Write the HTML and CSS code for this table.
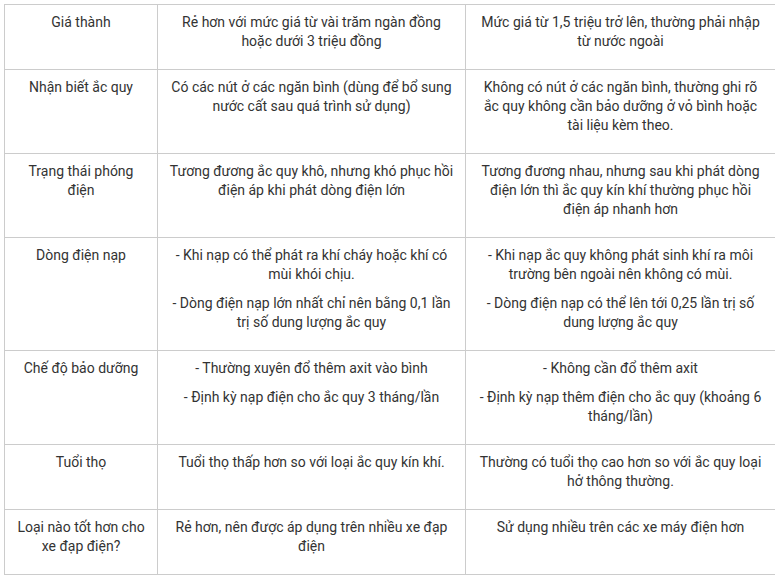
FILE: index.html
```html
<!DOCTYPE html>
<html lang="vi">
<head>
<meta charset="utf-8">
<title>So sánh ắc quy</title>
<link rel="stylesheet" href="styles.css">
</head>
<body>
<table class="cmp">
  <colgroup>
    <col class="c1">
    <col class="c2">
    <col class="c3">
  </colgroup>
  <tbody>
    <tr>
      <td><p>Giá thành</p></td>
      <td><p>Rẻ hơn với mức giá từ vài trăm ngàn đồng hoặc dưới 3 triệu đồng</p></td>
      <td><p>Mức giá từ 1,5 triệu trở lên, thường phải nhập từ nước ngoài</p></td>
    </tr>
    <tr>
      <td><p>Nhận biết ắc quy</p></td>
      <td><p>Có các nút ở các ngăn bình (dùng để bổ sung nước cất sau quá trình sử dụng)</p></td>
      <td><p>Không có nút ở các ngăn bình, thường ghi rõ ắc quy không cần bảo dưỡng ở vỏ bình hoặc tài liệu kèm theo.</p></td>
    </tr>
    <tr>
      <td><p>Trạng thái phóng điện</p></td>
      <td><p>Tương đương ắc quy khô, nhưng khó phục hồi điện áp khi phát dòng điện lớn</p></td>
      <td><p>Tương đương nhau, nhưng sau khi phát dòng điện lớn thì ắc quy kín khí thường phục hồi điện áp nhanh hơn</p></td>
    </tr>
    <tr>
      <td><p>Dòng điện nạp</p></td>
      <td><p>- Khi nạp có thể phát ra khí cháy hoặc khí có mùi khói chịu.</p><p>- Dòng điện nạp lớn nhất chỉ nên bằng 0,1 lần trị số dung lượng ắc quy</p></td>
      <td><p>- Khi nạp ắc quy không phát sinh khí ra môi trường bên ngoài nên không có mùi.</p><p>- Dòng điện nạp có thể lên tới 0,25 lần trị số dung lượng ắc quy</p></td>
    </tr>
    <tr>
      <td><p>Chế độ bảo dưỡng</p></td>
      <td><p>- Thường xuyên đổ thêm axit vào bình</p><p>- Định kỳ nạp điện cho ắc quy 3 tháng/lần</p></td>
      <td><p>- Không cần đổ thêm axit</p><p>- Định kỳ nạp thêm điện cho ắc quy (khoảng 6 tháng/lần)</p></td>
    </tr>
    <tr>
      <td><p>Tuổi thọ</p></td>
      <td><p>Tuổi thọ thấp hơn so với loại ắc quy kín khí.</p></td>
      <td><p>Thường có tuổi thọ cao hơn so với ắc quy loại hở thông thường.</p></td>
    </tr>
    <tr>
      <td><p>Loại nào tốt hơn cho xe đạp điện?</p></td>
      <td><p>Rẻ hơn, nên được áp dụng trên nhiều xe đạp điện</p></td>
      <td><p>Sử dụng nhiều trên các xe máy điện hơn</p></td>
    </tr>
  </tbody>
</table>
</body>
</html>
```

FILE: styles.css
```css
html, body {
  background: #ffffff;
}
body {
  margin: 4px;
  font-family: Roboto, "Noto Sans", sans-serif;
  font-size: 14px;
  line-height: 19px;
  color: #333333;
}
.cmp {
  width: 771px;
  border-collapse: collapse;
  table-layout: fixed;
}
.c1 { width: 153px; }
.c2 { width: 308px; }
.c3 { width: 310px; }
.cmp td {
  border: 1px solid #cccccc;
  padding: 8px 10px;
  text-align: center;
  vertical-align: top;
}
.cmp p {
  margin: 0 0 10px;
}
```
